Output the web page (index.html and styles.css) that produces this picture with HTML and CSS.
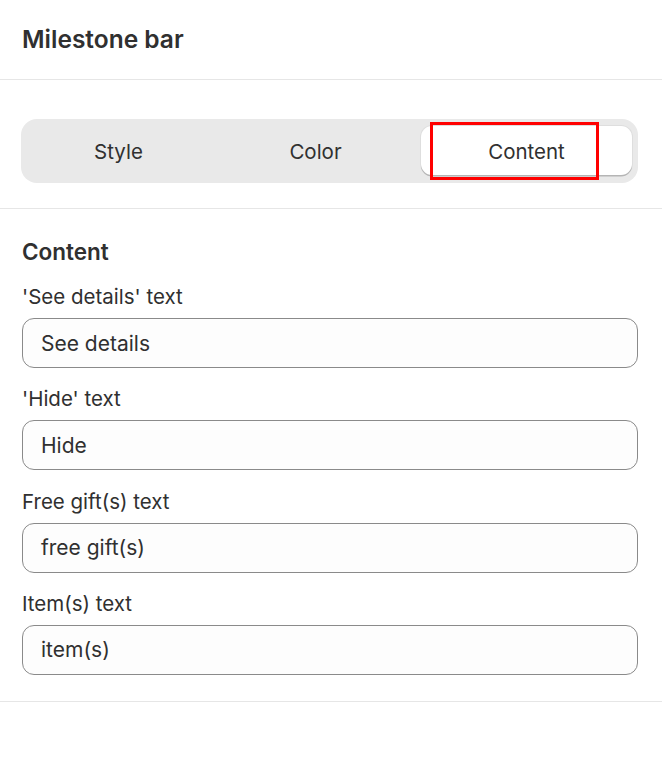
FILE: index.html
```html
<!DOCTYPE html>
<html>
<head>
<meta charset="utf-8">
<link rel="stylesheet" href="styles.css">
</head>
<body>
<div class="panel">
  <header class="header">
    <h1 class="title">Milestone bar</h1>
  </header>
  <section class="tabs-section">
    <div class="segmented">
      <div class="seg">Style</div>
      <div class="seg">Color</div>
      <div class="seg seg-active">Content<span class="highlight"></span></div>
    </div>
  </section>
  <section class="content">
    <h2 class="heading">Content</h2>
    <div class="fields">
      <label class="field">
        <span class="label">'See details' text</span>
        <span class="input">See details</span>
      </label>
      <label class="field">
        <span class="label">'Hide' text</span>
        <span class="input">Hide</span>
      </label>
      <label class="field">
        <span class="label">Free gift(s) text</span>
        <span class="input">free gift(s)</span>
      </label>
      <label class="field">
        <span class="label">Item(s) text</span>
        <span class="input">item(s)</span>
      </label>
    </div>
  </section>
</div>
</body>
</html>
```
FILE: styles.css
```css
* { box-sizing: border-box; }
html, body { margin: 0; padding: 0; background: #ffffff; }
body {
  font-family: Inter, "Noto Sans", "Liberation Sans", sans-serif;
  color: #303030;
}
.panel { width: 662px; }
.header {
  height: 80px;
  border-bottom: 1px solid #e6e6e6;
  display: flex;
  align-items: center;
  padding: 0 22px 2px 22px;
}
.title {
  margin: 0;
  font-size: 24.5px;
  font-weight: 600;
  line-height: 30px;
  color: #303030;
}
.tabs-section {
  padding: 39px 24px 25px 21px;
  border-bottom: 1px solid #e6e6e6;
}
.segmented {
  height: 64px;
  background: #e9e9e9;
  border-radius: 16px;
  display: grid;
  grid-template-columns: 183px 211px 211px;
  padding: 7px 6px 8px 6px;
}
.seg {
  display: flex;
  align-items: center;
  justify-content: center;
  font-size: 20.5px;
  color: #303030;
  position: relative;
  padding-top: 2px;
}
.seg-active {
  background: #ffffff;
  border-radius: 11px;
  box-shadow: 0 1.5px 0 #b5b5b5, 0 0 0 1px #dedede;
}
.highlight {
  position: absolute;
  left: 9px;
  top: -4px;
  width: 169px;
  height: 58px;
  border: 3px solid #ff0000;
}
.content {
  padding: 29px 24px 26px 22px;
  border-bottom: 1px solid #e6e6e6;
}
.heading {
  margin: 0 0 19px 0;
  font-size: 22.5px;
  font-weight: 600;
  line-height: 28px;
}
.fields {
  display: flex;
  flex-direction: column;
  gap: 19.3px;
}
.field {
  display: flex;
  flex-direction: column;
  gap: 9px;
}
.label {
  font-size: 20.5px;
  line-height: 24px;
}
.input {
  height: 50px;
  border: 1px solid #8a8a8a;
  border-radius: 12px;
  background: #fdfdfd;
  padding: 0 18px;
  display: flex;
  align-items: center;
  font-size: 21px;
}
```
